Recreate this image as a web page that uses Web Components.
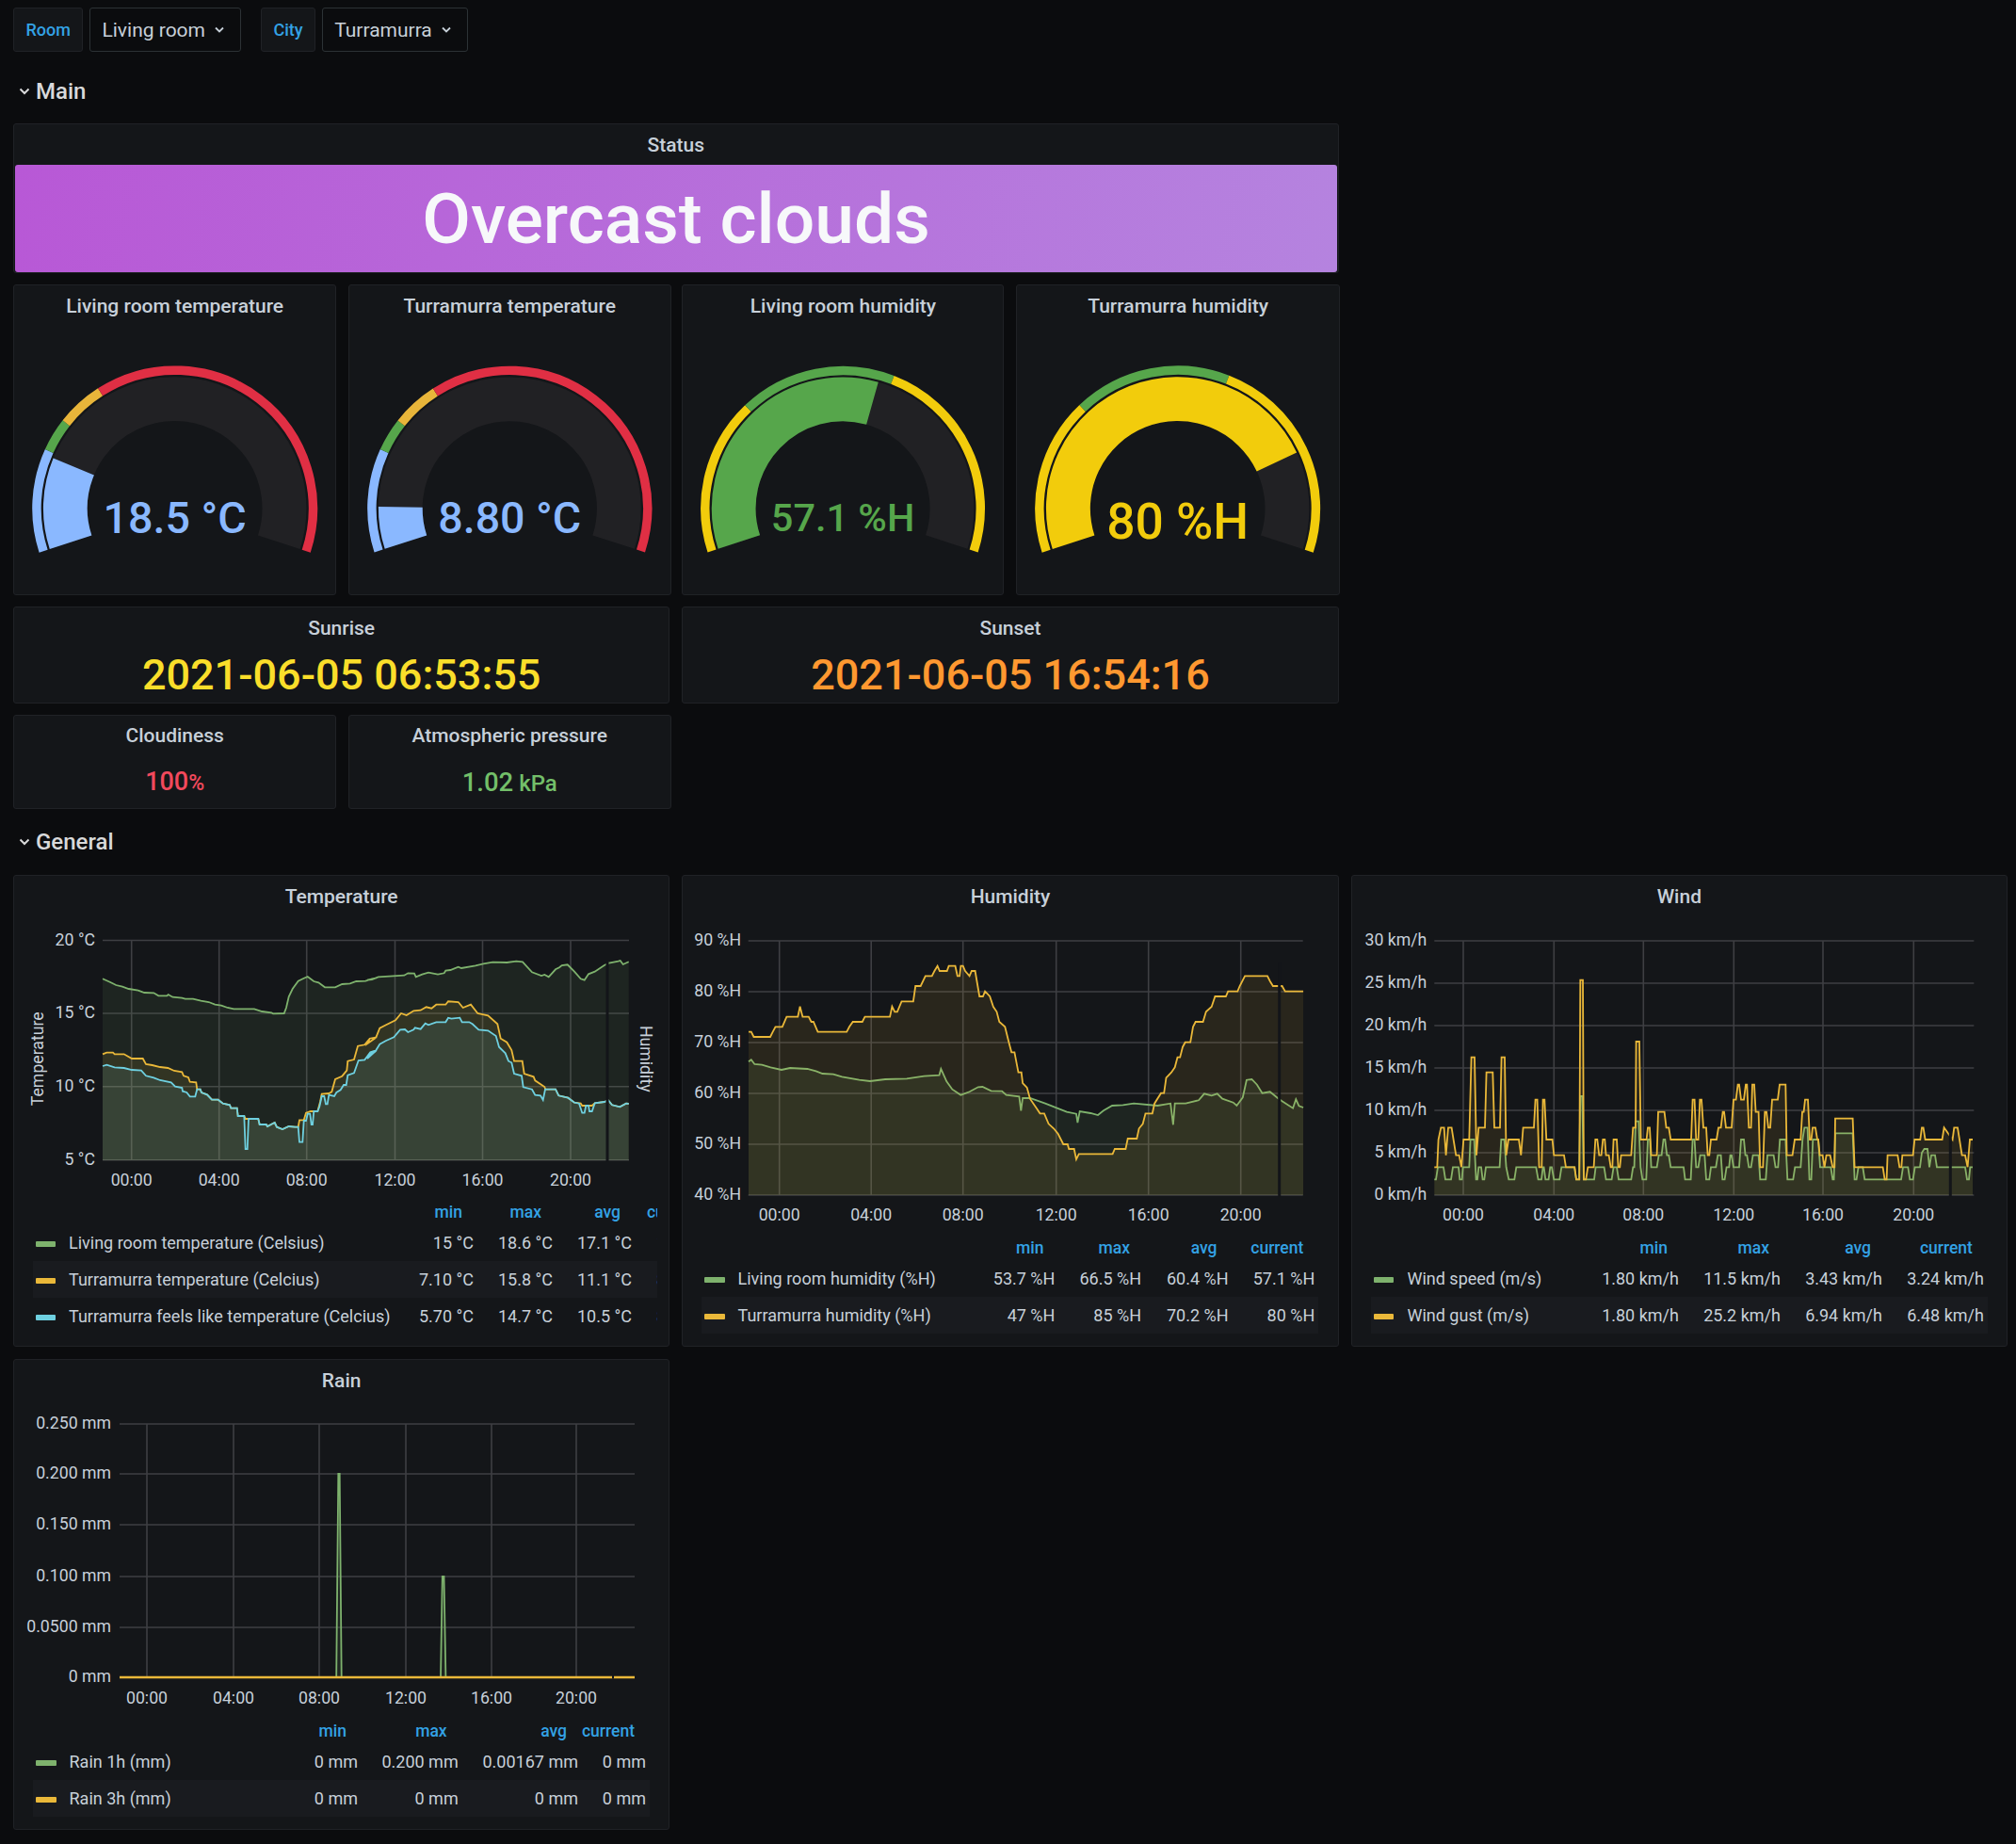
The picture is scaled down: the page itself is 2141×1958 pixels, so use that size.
<!DOCTYPE html>
<html>
<head>
<meta charset="utf-8">
<title>Home weather</title>
<style>
  html, body { margin: 0; background: #0b0c0e; }
  body {
    width: 2141px;
    height: 1958px;
    box-sizing: border-box;
    padding: 8px 9px 0 14px;
    font-family: Roboto, "Liberation Sans", sans-serif;
    color: #c7d0d9;
    overflow: hidden;
  }
  .vars { display: flex; height: 47px; }
  .grid {
    display: grid;
    grid-template-columns: repeat(6, 1fr);
    column-gap: 13px;
  }
  .main-grid { grid-template-rows: 159px 330px 102.5px 100.5px; row-gap: 12px; }
  .general-grid { grid-template-rows: 501px 499.5px; row-gap: 13px; }
  .new-row { grid-column-start: 1; }
  /* the small panels sit about a pixel wider than a plain sixth of the row */
  .wide { margin-right: -1.2px; }
  .nudged { margin-left: 0.8px; margin-right: -1.2px; }
</style>
</head>
<body>
  <div class="vars">
    <var-picker label="Room" value="Living room"></var-picker>
    <var-picker label="City" value="Turramurra" style="margin-left:21px"></var-picker>
  </div>
  <row-title style="margin-top:8px;height:68px">Main</row-title>
  <div class="grid main-grid">
    <dash-panel heading="Status" span="4"><status-banner>Overcast clouds</status-banner></dash-panel>
    <dash-panel class="new-row wide" heading="Living room temperature"><gauge-dial kind="temp" value="0.1875" text="18.5 °C" size="46.7" base="218"></gauge-dial></dash-panel>
    <dash-panel class="nudged" heading="Turramurra temperature"><gauge-dial kind="temp" value="0.0866" text="8.80 °C" size="46.7" base="218"></gauge-dial></dash-panel>
    <dash-panel heading="Living room humidity"><gauge-dial kind="hum" value="0.5727" text="57.1 %H" size="41.7" base="216" color="#56a64b"></gauge-dial></dash-panel>
    <dash-panel class="wide" heading="Turramurra humidity"><gauge-dial kind="hum" value="0.8" text="80 %H" size="53.5" base="224" color="#f2cc0c"></gauge-dial></dash-panel>
    <dash-panel class="new-row" heading="Sunrise" span="2"><stat-value value="2021-06-05 06:53:55" size="45" color="#fade2a"></stat-value></dash-panel>
    <dash-panel heading="Sunset" span="2"><stat-value value="2021-06-05 16:54:16" size="45" color="#ff9830"></stat-value></dash-panel>
    <dash-panel class="new-row wide" heading="Cloudiness"><stat-value style="padding-bottom:2px" value="100" unit="%" size="27" unit-size="23" color="#f2495c"></stat-value></dash-panel>
    <dash-panel class="nudged" heading="Atmospheric pressure"><stat-value style="padding-bottom:2px" value="1.02" unit=" kPa" size="27.5" unit-size="24" color="#73bf69"></stat-value></dash-panel>
  </div>
  <row-title style="height:70px">General</row-title>
  <div class="grid general-grid">
    <dash-panel heading="Temperature" span="2"><time-graph name="temperature"></time-graph></dash-panel>
    <dash-panel heading="Humidity" span="2"><time-graph name="humidity"></time-graph></dash-panel>
    <dash-panel heading="Wind" span="2"><time-graph name="wind"></time-graph></dash-panel>
    <dash-panel class="new-row" heading="Rain" span="2"><time-graph name="rain"></time-graph></dash-panel>
  </div>

<script>
const GREEN = '#7eb26d', AMBER = '#eab839', CYAN = '#6ed0e0';

// traces are read off the reference, x/y in crop units: page = origin + value / scale
function trace(str, shift = 0) {
  return str.trim().split(/\s+/).map(p => {
    const [x, y] = p.split(',').map(Number);
    return [x + shift, y];
  });
}

const tempBlue = trace(`27,396 40,392 65,400 95,402 120,408 150,410 165,427 190,433 210,441 245,448 258,461 280,465 282,476 295,480 305,493 322,493 328,470 338,470 342,480 360,487 375,503 395,503 410,515 432,520 436,530 455,530 458,555 478,555 482,660 488,660 492,564 523,564 527,582 548,582 552,588 575,576 582,590 600,597 620,588 640,590 650,590 654,638 664,638 668,570 675,570 680,548 688,548 692,582 696,582 700,540 712,540 718,525 725,492 733,492 738,517 743,517 748,488 765,492 772,480 785,472 795,456 803,456 808,425 828,418 842,378 862,376 880,352 900,345`)
  .concat(trace(`0,372 10,358 25,350 40,326 60,315 85,304 105,280 120,279 130,288 148,280 152,274 170,278 185,260 195,265 220,256 250,256 258,242 268,245 295,242 302,256 325,256 335,262 355,280 385,283 410,300 420,335 440,355 450,380 460,385 468,420 492,427 497,463 525,470 535,488 552,490 560,504 567,470 600,470 610,490 640,497 660,512 675,515 685,545 692,545 697,522 705,522 708,540 716,540 725,514 755,510 768,505 780,520 805,526 825,515 833,516`, 870));

const tempAmber = trace(`27,358 40,353 60,353 65,358 95,358 120,372 155,372 165,390 185,393 210,399 235,402 255,411 280,415 285,427 300,432 305,446 325,448 328,470 338,470 342,480 360,487 375,503 395,503 410,515 432,520 436,530 455,530 458,555 478,555 482,564 523,564 527,582 548,582 552,588 575,576 582,590 600,597 620,588 640,590 650,590 654,568 668,568 675,545 690,540 712,540 720,510 725,485 748,483 757,478 768,438 790,428 805,410 808,380 828,375 840,332 862,328 878,308 900,304`)
  .concat(trace(`0,325 8,308 28,305 40,275 60,265 90,250 108,228 125,234 148,220 170,218 188,208 205,212 220,200 250,200 258,190 290,192 305,210 330,200 352,228 385,235 415,262 425,308 445,320 460,345 468,380 494,380 500,420 530,430 535,442 565,462 568,470 600,470 610,490 640,497 660,512 680,515 685,522 716,522 725,514 755,510 768,505 780,520 805,526 825,515 833,516`, 870));

const tempGreen = trace(`27,118 50,128 70,138 90,143 110,150 140,155 160,162 190,163 205,172 232,172 236,168 250,176 280,179 290,182 315,182 340,188 365,192 385,200 405,203 425,210 445,214 510,214 535,222 565,226 570,229 605,228 612,210 620,175 632,150 650,125 665,118 680,111 700,126 715,130 735,145 768,145 790,135 815,133 835,126 865,125 885,118 900,115`)
  .concat(trace(`0,122 15,120 35,112 118,107 130,100 150,101 155,112 175,104 195,98 225,104 245,100 250,92 265,90 290,80 300,84 345,76 370,70 400,65 445,66 475,62 495,64 525,97 555,108 565,105 578,112 600,88 612,82 620,75 638,73 660,95 680,118 692,122 705,103 725,95 755,75 770,68 800,62 806,60 815,72 833,64`, 870));

const humAmber = trace(`164,527 170,527 176,543 214,543 220,527 226,511 242,511 252,479 278,479 283,446 289,479 303,479 309,495 314,495 324,527 391,527 397,511 405,495 427,495 433,479 491,479 496,446 502,463 508,463 518,430 545,430 550,381 562,381 573,349 588,349 594,333 601,317 606,333 623,333 627,317 642,317 647,349 652,349 655,317 660,317 665,333 675,349 680,333 688,333 698,414 706,414 711,398 722,414 730,447 738,463 744,495 757,511 766,560 772,592 779,592 788,656 795,656 798,690 808,705 815,740 830,770 838,787 848,787 858,820 870,835 880,852 892,885 902,885 905,900 917,900 922,933 928,916 1006,916 1011,900 1036,900 1041,867 1062,867 1067,835 1076,820 1082,787 1098,787 1103,755 1118,722 1125,722 1130,673 1142,656 1150,640 1156,608 1162,608 1168,575 1174,560 1186,560 1192,511 1198,495 1215,495 1222,463 1235,447 1243,414 1268,414 1273,398 1295,398 1300,381 1312,349 1364,349 1370,365 1377,381 1387,381 1398,381 1405,398 1447,398`);

const humGreen = trace(`164,622 170,616 178,630 195,632 215,640 240,648 260,642 300,645 320,652 335,660 360,662 380,670 420,680 445,684 480,678 530,676 570,668 605,665 609,645 622,685 635,710 655,728 675,718 695,703 705,702 725,715 750,716 760,728 790,733 794,778 798,738 815,738 850,755 900,782 922,788 925,816 930,780 955,786 972,792 985,778 1005,762 1030,760 1055,755 1110,762 1140,755 1146,823 1150,755 1175,755 1205,745 1218,724 1235,730 1248,724 1260,740 1285,752 1293,762 1307,736 1316,680 1328,678 1340,695 1352,722 1370,718 1388,738 1398,748 1423,770 1430,742 1437,763 1447,768`);

const windGust = trace(`9,718 18,718 22,630 30,592 40,592 46,680 53,592 64,592 70,630 78,680 88,680 95,718 102,630 120,630 127,368 137,368 143,680 150,592 170,592 175,416 195,416 200,592 218,592 223,368 233,368 238,680 245,630 278,630 285,680 292,592 326,592 331,503 337,503 343,718 351,718 355,503 360,503 366,630 385,630 390,680 422,680 428,718 456,718 461,757 471,757 474,122 482,122 485,757 492,757 498,718 517,718 522,630 528,630 534,680 541,680 546,630 552,630 556,680 565,680 571,718 576,718 580,630 590,630 595,718 600,718 604,680 636,680 642,592 650,592 652,318 662,318 667,630 685,630 689,592 695,592 700,680 718,680 722,542 742,542 748,592 756,592 762,630 827,630 832,503 838,503 843,630 850,630 855,503 860,503 866,592 870,592`)
  .concat(trace(`5,592 10,680 15,680 20,630 38,630 44,592 52,592 58,542 62,542 68,592 86,592 92,503 100,503 106,455 110,455 116,503 125,503 131,455 135,455 141,592 148,592 152,455 158,455 163,542 172,542 177,718 186,718 192,542 197,542 203,592 209,592 215,503 233,503 239,455 258,455 262,680 280,680 287,630 306,630 311,542 316,542 320,503 329,503 335,630 340,630 344,592 353,592 359,630 362,630 367,680 376,680 382,718 388,680 400,680 408,718 414,718 416,563 472,563 478,718 568,718 574,757 580,757 583,680 615,680 621,718 627,718 630,680 664,680 669,630 687,630 692,592 697,592 703,630 757,630 763,592 790,630 795,592 806,592 812,630 820,680 830,680 838,718 845,630 854,630`, 870));

const windSpeed = trace(`9,757 14,757 20,718 38,718 44,757 62,757 68,718 86,718 90,757 97,757 100,718 120,718 124,630 136,630 142,757 146,757 150,718 158,718 163,757 168,757 173,718 217,718 222,630 232,630 238,718 246,757 264,757 270,718 333,718 340,757 350,757 355,718 358,718 363,757 373,757 378,718 383,718 390,757 408,757 414,718 455,718 461,757 470,757 474,492 480,492 485,757 518,757 523,718 550,718 556,757 574,757 580,718 590,718 596,757 636,757 642,718 646,718 650,572 660,572 666,718 672,757 684,757 689,630 696,630 700,718 718,718 724,680 733,680 739,630 744,630 750,680 756,680 762,718 803,718 808,757 826,757 832,630 838,630 843,718 850,718 856,680 870,680`)
  .concat(trace(`5,757 15,757 20,718 36,718 42,680 52,680 57,757 64,757 70,718 78,718 82,680 86,680 92,718 110,718 116,630 125,630 130,680 135,680 141,718 148,718 154,680 172,680 177,757 195,757 200,680 220,680 226,718 234,718 240,630 258,630 264,757 282,757 288,718 306,718 312,630 318,592 328,592 334,757 340,757 345,630 362,630 368,718 402,718 408,757 412,757 416,610 472,610 478,757 484,757 490,718 504,718 510,757 626,757 632,718 648,718 654,757 664,757 670,718 686,718 692,672 700,660 710,660 716,718 722,680 734,680 740,718 830,718 836,757 842,757 846,718 854,718`, 870));

const GRAPHS = {
  temperature: {
    origin: [15, 975], height: 299,
    plot: { l: 109, r: 668, t: 998.5, b: 1232 },
    labelRight: 101, labelY: 1253,
    yTicks: [['20 °C', 998.5], ['15 °C', 1076], ['10 °C', 1153.7], ['5 °C', 1231.7]],
    xTicks: [['00:00', 139.7], ['04:00', 232.7], ['08:00', 325.7], ['12:00', 419.5], ['16:00', 512.5], ['20:00', 606]],
    scale: { ox: 100, oy: 1000, sx: 3, sy: 3 },
    series: [[GREEN, tempGreen], [AMBER, tempAmber], [CYAN, tempBlue]],
    gap: [643.5, 646.5, 1022],
    axisLeft: 'Temperature', axisRight: 'Humidity',
    legend: {
      left: 34.5, right: 758, clip: 698, valRight: [503, 587, 671, 755],
      rows: [
        [GREEN, 'Living room temperature (Celsius)', '15 °C', '18.6 °C', '17.1 °C', '18.5 °C'],
        [AMBER, 'Turramurra temperature (Celcius)', '7.10 °C', '15.8 °C', '11.1 °C', '8.80 °C'],
        [CYAN, 'Turramurra feels like temperature (Celcius)', '5.70 °C', '14.7 °C', '10.5 °C', '8.80 °C']
      ]
    }
  },
  humidity: {
    origin: [725.3, 975], height: 337,
    plot: { l: 795, r: 1384, t: 999, b: 1269 },
    labelRight: 787.5, labelY: 1290,
    yTicks: [['90 %H', 999], ['80 %H', 1053], ['70 %H', 1107], ['60 %H', 1161], ['50 %H', 1215], ['40 %H', 1269]],
    xTicks: [['00:00', 828], ['04:00', 925.5], ['08:00', 1023], ['12:00', 1122], ['16:00', 1220], ['20:00', 1318]],
    scale: { ox: 720, oy: 920, sx: 2.178, sy: 3 },
    series: [[GREEN, humGreen], [AMBER, humAmber]],
    gap: [1357.5, 1360.5, 1022],
    legend: {
      left: 745, right: 1399.5, valRight: [1120.4, 1212, 1304.5, 1396.3],
      rows: [
        [GREEN, 'Living room humidity (%H)', '53.7 %H', '66.5 %H', '60.4 %H', '57.1 %H'],
        [AMBER, 'Turramurra humidity (%H)', '47 %H', '85 %H', '70.2 %H', '80 %H']
      ]
    }
  },
  wind: {
    origin: [1435.7, 975], height: 337,
    plot: { l: 1523, r: 2096, t: 999, b: 1269 },
    labelRight: 1515, labelY: 1290,
    yTicks: [['30 km/h', 999], ['25 km/h', 1044], ['20 km/h', 1089], ['15 km/h', 1134], ['10 km/h', 1179], ['5 km/h', 1224], ['0 km/h', 1269]],
    xTicks: [['00:00', 1553.7], ['04:00', 1650], ['08:00', 1745], ['12:00', 1841], ['16:00', 1935.7], ['20:00', 2032]],
    scale: { ox: 1520, oy: 1000, sx: 3, sy: 3 },
    series: [[GREEN, windSpeed], [AMBER, windGust]],
    gap: [2069.5, 2072.5, 1197],
    legend: {
      left: 1456, right: 2111, valRight: [1783, 1891, 1999, 2107],
      rows: [
        [GREEN, 'Wind speed (m/s)', '1.80 km/h', '11.5 km/h', '3.43 km/h', '3.24 km/h'],
        [AMBER, 'Wind gust (m/s)', '1.80 km/h', '25.2 km/h', '6.94 km/h', '6.48 km/h']
      ]
    }
  },
  rain: {
    origin: [15, 1489], height: 336,
    plot: { l: 127, r: 674, t: 1512, b: 1781 },
    labelRight: 118, labelY: 1803,
    yTicks: [['0.250 mm', 1512], ['0.200 mm', 1565], ['0.150 mm', 1619], ['0.100 mm', 1674], ['0.0500 mm', 1728], ['0 mm', 1781]],
    xTicks: [['00:00', 156], ['04:00', 248], ['08:00', 339], ['12:00', 431], ['16:00', 522], ['20:00', 612]],
    scale: { ox: 0, oy: 0, sx: 1, sy: 1 },
    series: [
      [GREEN, [[127, 1781], [357.2, 1781], [359.3, 1565], [360.7, 1565], [362.7, 1781], [468, 1781], [469.8, 1674], [471.5, 1674], [473.4, 1781], [674, 1781]]],
      [AMBER, [[127, 1781], [674, 1781]], 2.4]
    ],
    gap: [650, 652, 1779],
    legend: {
      left: 35, right: 690, valRight: [380, 486.7, 614, 686],
      rows: [
        [GREEN, 'Rain 1h (mm)', '0 mm', '0.200 mm', '0.00167 mm', '0 mm'],
        [AMBER, 'Rain 3h (mm)', '0 mm', '0 mm', '0 mm', '0 mm']
      ]
    }
  }
};

class VarPicker extends HTMLElement {
  constructor() {
    super();
    this.attachShadow({ mode: 'open' });
  }
  connectedCallback() {
    this.shadowRoot.innerHTML = `
      <style>
        :host { display: flex; gap: 7px; height: 47px; font-family: Roboto, "Liberation Sans", sans-serif; }
        .label, .value { display: flex; align-items: center; box-sizing: border-box; border-radius: 3px; }
        .label {
          padding: 0 12.5px;
          background: #141619;
          border: 1px solid #202226;
          color: #33a2e5;
          font-size: 18px;
          font-weight: 500;
        }
        .value {
          padding: 0 16px 0 12px;
          background: #0b0c0e;
          border: 1px solid #2c3235;
          color: #c7d0d9;
          font-size: 21px;
        }
        svg { margin-left: 9px; }
      </style>
      <div class="label">${this.getAttribute('label')}</div>
      <div class="value">${this.getAttribute('value')}
        <svg width="12" height="8" viewBox="0 0 12 8"><polyline points="2,1.5 6,5.5 10,1.5" fill="none" stroke="#c7d0d9" stroke-width="1.8"/></svg>
      </div>`;
  }
}
customElements.define('var-picker', VarPicker);

class RowTitle extends HTMLElement {
  constructor() {
    super();
    this.attachShadow({ mode: 'open' });
    this.shadowRoot.innerHTML = `
      <style>
        :host {
          display: flex;
          align-items: center;
          padding-left: 6px;
          font-size: 24px;
          font-weight: 500;
          color: #d8d9da;
        }
        svg { margin-right: 6px; }
      </style>
      <svg width="12" height="8" viewBox="0 0 12 8"><polyline points="1.5,1.5 6,6 10.5,1.5" fill="none" stroke="#d8d9da" stroke-width="2"/></svg>
      <slot></slot>`;
  }
}
customElements.define('row-title', RowTitle);

class DashPanel extends HTMLElement {
  constructor() {
    super();
    this.attachShadow({ mode: 'open' });
  }
  connectedCallback() {
    this.shadowRoot.innerHTML = `
      <style>
        :host {
          display: flex;
          flex-direction: column;
          box-sizing: border-box;
          min-width: 0;
          background: #141619;
          border: 1px solid #202226;
          border-radius: 3px;
          overflow: hidden;
        }
        :host([span="2"]) { grid-column-end: span 2; }
        :host([span="4"]) { grid-column-end: span 4; }
        .title {
          flex: none;
          box-sizing: border-box;
          height: 45px;
          padding-bottom: 2px;
          display: flex;
          align-items: center;
          justify-content: center;
          font-size: 21px;
          font-weight: 500;
          color: #c7d0d9;
        }
        .body { flex: 1; min-height: 0; display: flex; flex-direction: column; }
      </style>
      <div class="title">${this.getAttribute('heading')}</div>
      <div class="body"><slot></slot></div>`;
  }
}
customElements.define('dash-panel', DashPanel);

class StatusBanner extends HTMLElement {
  constructor() {
    super();
    this.attachShadow({ mode: 'open' });
    this.shadowRoot.innerHTML = `
      <style>
        :host {
          flex: 1;
          display: flex;
          align-items: center;
          justify-content: center;
          margin: -2px 0.5px 0 1px;
          border-radius: 3px;
          background: linear-gradient(100deg, #b858d6, #b583df);
          color: #f7f8fa;
          font-size: 75px;
          font-weight: 500;
        }
      </style>
      <slot></slot>`;
  }
}
customElements.define('status-banner', StatusBanner);

class StatValue extends HTMLElement {
  constructor() {
    super();
    this.attachShadow({ mode: 'open' });
  }
  connectedCallback() {
    const unit = this.getAttribute('unit');
    const unitSize = this.getAttribute('unit-size');
    this.shadowRoot.innerHTML = `
      <style>
        :host {
          flex: 1;
          display: flex;
          align-items: center;
          justify-content: center;
          padding-bottom: 4px;
          white-space: pre;
          font-weight: 500;
          color: ${this.getAttribute('color')};
          font-size: ${this.getAttribute('size')}px;
        }
      </style>
      <span>${this.getAttribute('value')}${unit ? `<span style="font-size:${unitSize}px">${unit}</span>` : ''}</span>`;
  }
}
customElements.define('stat-value', StatValue);

const BANDS = {
  temp: [[0, 0.197, '#8ab8ff'], [0.197, 0.26, '#56a64b'], [0.26, 0.349, '#e8b53a'], [0.349, 1, '#e02f44']],
  hum: [[0, 0.2986, '#f2cc0c'], [0.2986, 0.598, '#56a64b'], [0.598, 1, '#f2cc0c']]
};

function arcPath(cx, cy, r, from, to) {
  // fractions of the 216 degree sweep, starting 18 degrees below the left horizontal
  const pt = f => {
    const a = (162 + 216 * f) * Math.PI / 180;
    return [cx + r * Math.cos(a), cy + r * Math.sin(a)];
  };
  const [x1, y1] = pt(from), [x2, y2] = pt(to);
  const large = (to - from) * 216 > 180 ? 1 : 0;
  return `M${x1.toFixed(2)} ${y1.toFixed(2)}A${r} ${r} 0 ${large} 1 ${x2.toFixed(2)} ${y2.toFixed(2)}`;
}

class GaugeDial extends HTMLElement {
  constructor() {
    super();
    this.attachShadow({ mode: 'open' });
  }
  connectedCallback() {
    const cx = 171, cy = 192;
    const kind = this.getAttribute('kind');
    const value = +this.getAttribute('value');
    const bands = BANDS[kind];
    const color = this.getAttribute('color') || bands[0][2];
    const outer = bands.map(b => `<path d="${arcPath(cx, cy, 147, b[0], b[1])}" stroke="${b[2]}" stroke-width="9.5" fill="none"/>`).join('');
    this.shadowRoot.innerHTML = `
      <style>
        :host { display: flex; justify-content: center; flex: 1; }
        text { font-family: Roboto, "Liberation Sans", sans-serif; font-weight: 500; }
      </style>
      <svg width="342" height="284" viewBox="0 0 342 284">
        <path d="${arcPath(cx, cy, 116.5, 0, 1)}" stroke="#212124" stroke-width="47" fill="none"/>
        <path d="${arcPath(cx, cy, 116.5, 0, value)}" stroke="${color}" stroke-width="47" fill="none"/>
        ${outer}
        <text x="${cx}" y="${this.getAttribute('base')}" text-anchor="middle" fill="${color}" font-size="${this.getAttribute('size')}">${this.getAttribute('text')}</text>
      </svg>`;
  }
}
customElements.define('gauge-dial', GaugeDial);

class TimeGraph extends HTMLElement {
  constructor() {
    super();
    this.attachShadow({ mode: 'open' });
  }
  connectedCallback() {
    const cfg = GRAPHS[this.getAttribute('name')];
    this.shadowRoot.innerHTML = `
      <style>
        :host { display: block; font-size: 18px; color: #c7d0d9; }
        svg { display: block; }
        svg text { font-family: Roboto, "Liberation Sans", sans-serif; font-size: 17.7px; fill: #c7d0d9; }
        .legend { overflow: hidden; }
        .row { display: grid; height: 39px; align-items: center; white-space: nowrap; }
        .row.alt { background: #191b1f; }
        .head { height: 26px; color: #33a2e5; font-weight: 500; font-size: 17.5px; }
        .head div { padding-right: 12px; }
        .num { text-align: right; }
        .swatch {
          display: inline-block;
          width: 21.5px;
          height: 6px;
          margin: 0 14px 0 3px;
          border-radius: 1px;
          vertical-align: middle;
        }
      </style>
      ${this.renderChart(cfg)}
      ${this.renderLegend(cfg.legend, cfg.origin[0])}`;
  }

  renderChart(cfg) {
    const { plot, scale: s, origin } = cfg;
    const grid = '#3e3f43';
    let out = '';
    cfg.yTicks.forEach(([t, y]) => {
      out += `<line x1="${plot.l}" x2="${plot.r}" y1="${y}" y2="${y}" stroke="${grid}" stroke-width="1.6"/>`;
      out += `<text x="${cfg.labelRight}" y="${y + 5}" text-anchor="end">${t}</text>`;
    });
    if (plot.b > cfg.yTicks[cfg.yTicks.length - 1][1] + 0.5) {
      out += `<line x1="${plot.l}" x2="${plot.r}" y1="${plot.b}" y2="${plot.b}" stroke="${grid}" stroke-width="1.6"/>`;
    }
    cfg.xTicks.forEach(([t, x]) => {
      out += `<line x1="${x}" x2="${x}" y1="${plot.t}" y2="${plot.b}" stroke="${grid}" stroke-width="1.6"/>`;
      out += `<text x="${x}" y="${cfg.labelY + 6}" text-anchor="middle">${t}</text>`;
    });
    cfg.series.forEach(([color, pts, width = 1.8]) => {
      const line = pts.map(p => `${(s.ox + p[0] / s.sx).toFixed(1)},${(s.oy + p[1] / s.sy).toFixed(1)}`);
      const first = line[0].split(',')[0], last = line[line.length - 1].split(',')[0];
      out += `<polygon points="${first},${plot.b} ${line.join(' ')} ${last},${plot.b}" fill="${color}" fill-opacity="0.1"/>`;
      out += `<polyline points="${line.join(' ')}" fill="none" stroke="${color}" stroke-width="${width}"/>`;
    });
    const [g1, g2, gt] = cfg.gap;
    out += `<rect x="${g1}" y="${gt}" width="${g2 - g1}" height="${plot.b - gt + 1.5}" fill="#131519"/>`;
    if (cfg.axisLeft) {
      const midY = (plot.t + plot.b) / 2 + 9;
      out += `<text transform="translate(46 ${midY}) rotate(-90)" text-anchor="middle">${cfg.axisLeft}</text>`;
      out += `<text transform="translate(680 ${midY}) rotate(90)" text-anchor="middle">${cfg.axisRight}</text>`;
    }
    return `<svg width="100%" height="${cfg.height}"><g transform="translate(${-origin[0]} ${-origin[1]})">${out}</g></svg>`;
  }

  renderLegend(lg, originX) {
    const edges = lg.valRight;
    const widths = edges.map((e, i) => i ? e - edges[i - 1] : edges[1] - edges[0]);
    const labelW = edges[0] - lg.left - widths[0];
    const cols = [labelW, ...widths, lg.right - edges[edges.length - 1]].map(w => w.toFixed(1) + 'px').join(' ');
    const style = `grid-template-columns:${cols};width:${lg.right - lg.left}px`;
    const cell = (t, cls = 'num') => `<div class="${cls}">${t}</div>`;
    const head = `<div class="row head" style="${style}"><div></div>${['min', 'max', 'avg', 'current'].map(h => cell(h)).join('')}<div style="padding:0"></div></div>`;
    const rows = lg.rows.map((r, i) => `
      <div class="row${i % 2 ? ' alt' : ''}" style="${style}">
        <div><span class="swatch" style="background:${r[0]}"></span>${r[1]}</div>
        ${r.slice(2).map(v => cell(v)).join('')}<div></div>
      </div>`).join('');
    const box = lg.clip ? `width:${lg.clip - lg.left}px;` : `width:${lg.right - lg.left}px;`;
    return `<div class="legend" style="margin-left:${lg.left - originX}px;${box}">${head}${rows}</div>`;
  }
}
customElements.define('time-graph', TimeGraph);
</script>
</body>
</html>
